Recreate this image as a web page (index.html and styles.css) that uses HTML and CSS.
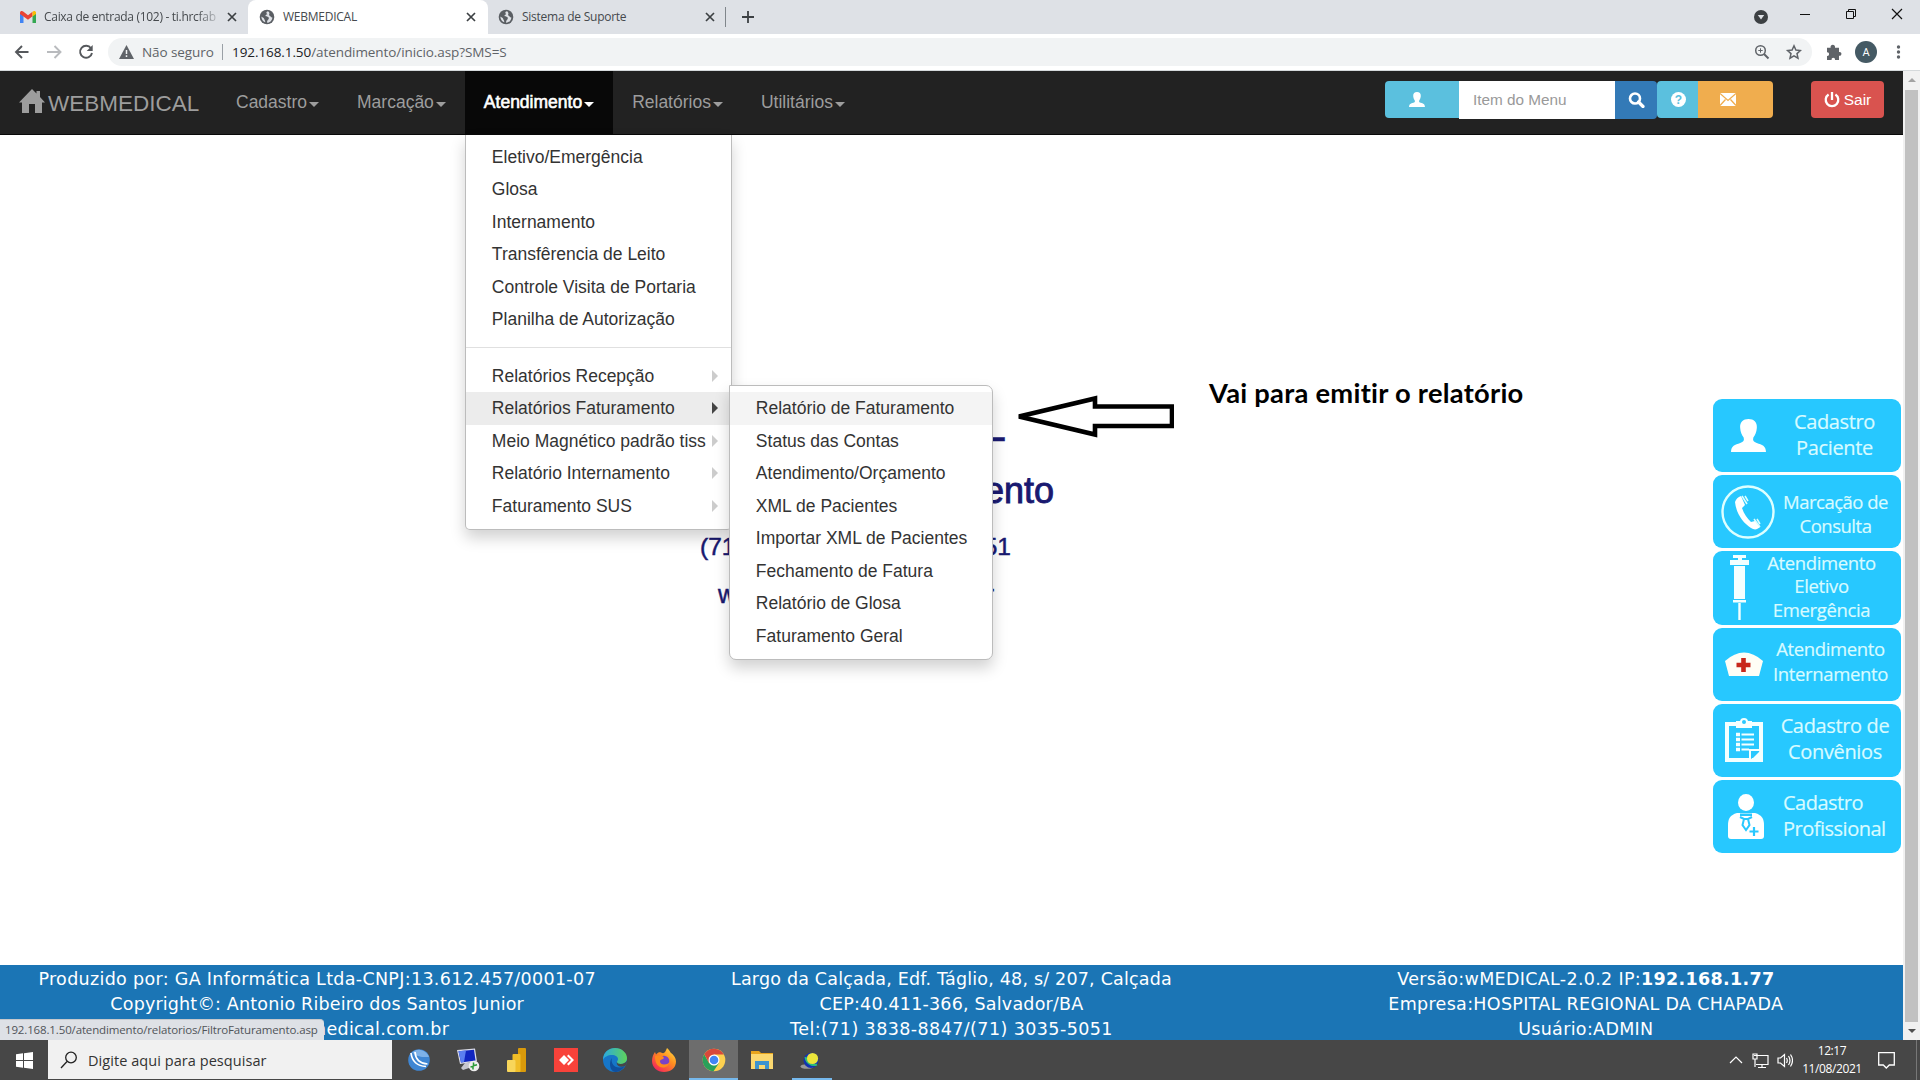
FILE: index.html
```html
<!DOCTYPE html>
<html lang="pt-BR">
<head>
<meta charset="utf-8">
<title>WEBMEDICAL</title>
<link rel="stylesheet" href="styles.css">
</head>
<body>
<svg class="defs" width="0" height="0">
  <symbol id="globe" viewBox="0 0 16 16"><circle cx="8" cy="8" r="7.3" fill="#5a5e63"/><path d="M9 2.2c-2 .3-2 2-1 2.600s-1.500.8-1.500 2 3 .3 3.300 2.200-2.300 2-1.600 4.800c3-.2 5-2.700 5.200-5.400-1.400.4-1.700-1.600-3-2S12 4.300 9 2.200zM2.300 7.600c.2 3 1.700 5 3.900 5.700.2-1.900-.6-1.900-1-3.300S3 8.600 2.300 7.600z" fill="#dee1e6"/></symbol>
  <symbol id="close" viewBox="0 0 10 10"><path d="M1 1l8 8M9 1L1 9" stroke="#3c4043" stroke-width="1.700"/></symbol>
  <symbol id="user" viewBox="0 0 36 34"><path d="M18 0c5.500 0 9 3.500 8.600 9-.3 4.500-1.600 7.500-3.600 10-.9 3 .2 4.600 3.500 5.600C32 26.400 36 27.500 36 34H0c0-6.500 4-7.600 9.500-9.400 3.300-1 4.400-2.600 3.500-5.600-2-2.500-3.300-5.500-3.600-10C9 3.500 12.500 0 18 0z" fill="#fff"/></symbol>
</svg>

<header class="tabs">
  <div class="tab">
    <svg class="fav" viewBox="0 0 16 12"><path d="M0 1.500V12h3.500V5z" fill="#4285f4"/><path d="M12.500 5v7H16V1.500z" fill="#34a853"/><path d="M0 2c0-2 2-2.500 3.500-1.300L8 4.200 12.500.7v4.600L8 8.800 0 3z" fill="#ea4335"/><path d="M12.500.7C14 -.5 16 0 16 2v1l-3.500 2.500z" fill="#fbbc04"/></svg>
    <span class="tab-title fade">Caixa de entrada (102) - ti.hrcfab</span>
    <svg class="x"><use href="#close"/></svg>
  </div>
  <div class="tab active">
    <svg class="fav g"><use href="#globe"/></svg>
    <span class="tab-title">WEBMEDICAL</span>
    <svg class="x"><use href="#close"/></svg>
  </div>
  <div class="tab last">
    <svg class="fav g"><use href="#globe"/></svg>
    <span class="tab-title">Sistema de Suporte</span>
    <svg class="x"><use href="#close"/></svg>
  </div>
  <i class="tab-sep"></i>
  <svg class="plus" viewBox="0 0 12 12"><path d="M6 0v12M0 6h12" stroke="#3c4043" stroke-width="1.800"/></svg>
  <svg class="winctl" width="160" height="34" viewBox="0 0 160 34">
    <circle cx="11" cy="17" r="7" fill="#3c4043"/><path d="M7.800 15h6.400L11 19.500z" fill="#dee1e6"/>
    <path d="M50 14.500h10" stroke="#111"/>
    <path d="M96.500 11.500h7v7h-7zM98.500 11.500v-2h7v7h-2" fill="none" stroke="#111"/>
    <path d="M142 9l10 10M152 9l-10 10" stroke="#111" stroke-width="1.200"/>
  </svg>
</header>

<div class="toolbar">
  <svg width="108" height="36" viewBox="0 0 108 36" fill="none" stroke-width="1.900">
    <path d="M28.500 18H16M22 12l-6 6 6 6" stroke="#55585c"/><path d="M47 18h13M54.500 12l6 6-6 6" stroke="#b9bbbe"/>
    <path d="M91 14.200a6 6 0 1 0 1 4.800" stroke="#55585c"/><path d="M92.700 11v6h-6z" fill="#55585c"/>
  </svg>
  <div class="omnibox">
    <svg width="15" height="14" viewBox="0 0 15 14"><path d="M7.500 0L15 14H0z" fill="#5f6368"/><path d="M7.500 5v4M7.500 10.300v1.700" stroke="#f1f3f4" stroke-width="1.500"/></svg>
    <span class="insecure">Não seguro</span><i></i><span class="url"><b>192.168.1.50</b>/atendimento/inicio.asp?SMS=S</span>
    <svg class="omni-icons" width="50" height="20" viewBox="0 0 50 20" fill="none" stroke="#5f6368" stroke-width="1.500">
      <circle cx="8.500" cy="8.500" r="4.800"/><path d="M12 12l4.500 4.500" stroke-width="1.900"/><path d="M6.300 8.500h4.400M8.500 6.300v4.400" stroke-width="1"/>
      <path d="M42 3.800l1.900 4.200 4.500.5-3.400 3.100 1 4.600-4-2.400-4 2.400 1-4.600-3.400-3.100 4.500-.5z"/>
    </svg>
  </div>
  <svg class="tool-right" width="108" height="36" viewBox="0 0 108 36">
    <path d="M15 13.800h3.600c-.8-4 5.200-4 4.400 0H27v4.300c3.300-.6 3.300 4.200 0 3.700V26h-4c.5-3-3.900-3-3.400 0H15v-4c2.800.3 2.800-4 0-3.700z" fill="#5f6368"/>
    <circle cx="54" cy="18" r="11" fill="#455a64"/><text x="54" y="22" text-anchor="middle" fill="#fff" font-family="Roboto" font-size="11">A</text>
    <g fill="#5f6368"><circle cx="86.500" cy="13" r="1.700"/><circle cx="86.500" cy="18" r="1.700"/><circle cx="86.500" cy="23" r="1.700"/></g>
  </svg>
</div>

<div class="viewport">
 <div class="page">
  <nav class="navbar">
    <a class="brand"><svg width="26" height="24" viewBox="0 0 26 24"><path d="M13 0l4.500 4.500V2H21v6l5 5.500h-3V24h-7v-9h-6v9H3V13.500H0z" fill="#9d9d9d"/></svg><span>WEBMEDICAL</span></a>
    <a class="nav-item">Cadastro<i></i></a>
    <a class="nav-item">Marcação<i></i></a>
    <div class="nav-item open">Atendimento<i></i>
      <ul class="menu">
        <li>Eletivo/Emergência</li><li>Glosa</li><li>Internamento</li><li>Transfêrencia de Leito</li><li>Controle Visita de Portaria</li><li>Planilha de Autorização</li>
        <li class="divider"></li>
        <li class="more">Relatórios Recepção</li>
        <li class="more hover">Relatórios Faturamento
          <ul class="menu sub">
            <li class="hover">Relatório de Faturamento</li><li>Status das Contas</li><li>Atendimento/Orçamento</li><li>XML de Pacientes</li><li>Importar XML de Pacientes</li><li>Fechamento de Fatura</li><li>Relatório de Glosa</li><li>Faturamento Geral</li>
          </ul>
        </li>
        <li class="more">Meio Magnético padrão tiss</li>
        <li class="more">Relatório Internamento</li>
        <li class="more">Faturamento SUS</li>
      </ul>
    </div>
    <a class="nav-item">Relatórios<i></i></a>
    <a class="nav-item">Utilitários<i></i></a>
    <div class="actions">
      <button class="btn info user"><svg width="16" height="15"><use href="#user"/></svg></button>
      <div class="field">Item do Menu</div>
      <button class="btn primary"><svg width="17" height="16" viewBox="0 0 17 16"><circle cx="7" cy="6.500" r="5" fill="none" stroke="#fff" stroke-width="2.600"/><path d="M10.500 10l4.500 4.500" stroke="#fff" stroke-width="3.200" stroke-linecap="round"/></svg></button>
      <button class="btn info help"><svg width="15" height="15" viewBox="0 0 15 15"><circle cx="7.500" cy="7.500" r="7.500" fill="#fff"/><text x="7.500" y="12" text-anchor="middle" font-family="Liberation Sans" font-weight="700" font-size="12" fill="#5bc0de">?</text></svg></button>
      <button class="btn warn"><svg width="16" height="13" viewBox="0 0 16 13"><path d="M0 0h16v13H0z" fill="#fff"/><path d="M0 .5l8 7 8-7M0 12.500l5.500-6M16 12.500l-5.500-6" fill="none" stroke="#f0ad4e" stroke-width="1.300"/></svg></button>
      <button class="btn danger"><svg width="16" height="16" viewBox="0 0 16 16" fill="none" stroke="#fff" stroke-width="2.300"><path d="M4.600 2.500a6.300 6.300 0 1 0 6.800 0M8 0v8"/></svg>Sair</button>
    </div>
  </nav>

  <main class="content">
    <section class="hero">
      <p class="h-name">L</p>
      <p class="h-title">ento</p>
      <p class="h-phone"><span>(71</span><span>51</span></p>
      <p class="h-site"><span>w</span><span>r</span></p>
    </section>
    <svg class="note-arrow" width="162" height="46" viewBox="0 0 162 46"><path d="M7 21.500L83 3.500V11.500H160V31H83V39.500z" fill="#fff" stroke="#000" stroke-width="4.600"/></svg>
    <p class="note">Vai para emitir o relatório</p>
    <aside class="shortcuts">
      <a class="card c1"><svg width="35" height="33" viewBox="0 0 36 34"><use href="#user"/></svg><span>Cadastro<br>Paciente</span></a>
      <a class="card c2"><svg width="54" height="54" viewBox="0 0 54 54"><circle cx="27" cy="27" r="25.500" fill="none" stroke="#dff" stroke-width="2.400"/><path d="M14 17c1-3 3-5 6-6l4 9-3 3c2 6 5 10 9 14l4-1 5 6c-3 3-6 3-9 1C22 38 15 28 14 17z" fill="#fff"/><path d="M21 11l5 8M24 11l3 5M33 34l6 8M36 34l3 5" stroke="#dff" stroke-width="1.500"/></svg><span>Marcação de<br>Consulta</span></a>
      <a class="card c3"><svg width="19" height="65" viewBox="0 0 19 65" fill="#f4ffff"><path d="M3 0h13v3H3zM8 3h4v2H8zM0 5h19v5H0zM4 11h11v33H4zM3 45h13v2.500H3zM8.300 48h2.400v17H8.300z"/></svg><span>Atendimento<br>Eletivo<br>Emergência</span></a>
      <a class="card c4"><svg width="38" height="25" viewBox="0 0 38 25"><path d="M0 9Q19-8 38 9l-4 15H4z" fill="#fffef6"/><path d="M18.500 6v14M11.500 13h14" stroke="#c8281c" stroke-width="4.600"/></svg><span>Atendimento<br>Internamento</span></a>
      <a class="card c5"><svg width="38" height="44" viewBox="0 0 38 44"><path d="M2 6h34v36H2z" fill="none" stroke="#f4ffff" stroke-width="4"/><path d="M11 3h16v7H11z" fill="#f4ffff"/><circle cx="19" cy="4" r="3" fill="#27c8ff" stroke="#f4ffff" stroke-width="2"/><path d="M11 16.500h4M11 21.500h4M11 26.500h4M11 31.500h4" stroke="#f4ffff" stroke-width="3.600"/><path d="M16.500 16.500H29M16.500 21.500H29M16.500 26.500H29M16.500 31.500H24" stroke="#f4ffff" stroke-width="2"/><path d="M25 42V32h11" fill="#27c8ff" stroke="#f4ffff" stroke-width="2"/><path d="M35 33v8h-8z" fill="#f4ffff"/></svg><span>Cadastro de<br>Convênios</span></a>
      <a class="card c6"><svg width="36" height="45" viewBox="0 0 36 45"><ellipse cx="18" cy="8.500" rx="8" ry="8.500" fill="#fff"/><path d="M9 19h18c7 2 9 6 9 12v11q0 3-3 3H3q-3 0-3-3V31c0-6 2-10 9-12z" fill="#fff"/><path d="M12 19.500h12v2.500H12z" fill="#27c8ff"/><path d="M12 23l4 2h4l4-2M16 25l-1.500 6 3.500 5 3.500-5-1.500-6" fill="none" stroke="#27c8ff" stroke-width="2"/><path d="M26 33v9M21.500 37.500h9" stroke="#27c8ff" stroke-width="2.200"/></svg><span>Cadastro<br>Profissional</span></a>
    </aside>
  </main>

  <footer class="footer">
    <div class="f1">Produzido por: GA Informática Ltda-CNPJ:13.612.457/0001-07<br><span class="tight">Copyright©: Antonio Ribeiro dos Santos Junior</span><br><span class="site">medical.com.br</span></div>
    <div class="f2">Largo da Calçada, Edf. Táglio, 48, s/ 207, Calçada<br>CEP:40.411-366, Salvador/BA<br><span class="wide">Tel:(71) 3838-8847/(71) 3035-5051</span></div>
    <div class="f3">Versão:wMEDICAL-2.0.2 IP:<b>192.168.1.77</b><br>Empresa:HOSPITAL REGIONAL DA CHAPADA<br>Usuário:ADMIN</div>
  </footer>
 </div>
 <div class="scrollbar"><i class="up"></i><b></b><i class="down"></i></div>
 <div class="status">192.168.1.50/atendimento/relatorios/FiltroFaturamento.asp</div>
</div>

<div class="taskbar">
  <div class="start"><svg width="17" height="17" viewBox="0 0 17 17" fill="#fff"><path d="M0 2.300L7 1.300V8H0zM8 1.200L17 0v8H8zM0 9h7v6.700l-7-1zM8 9h9v8l-9-1.200z"/></svg></div>
  <div class="search"><svg width="18" height="18" viewBox="0 0 18 18" fill="none" stroke="#222" stroke-width="1.300"><circle cx="11" cy="6.500" r="5.300"/><path d="M7 10.500L1 17"/></svg><span>Digite aqui para pesquisar</span></div>
  <div class="app"><svg viewBox="0 0 24 24"><circle cx="12" cy="12" r="10.800" fill="#3f86d3"/><path d="M5 4.500A10.500 10.500 0 0 1 22 9c-4 0-10 1-17-4.500z" fill="#7db1e8"/><path d="M4 5c1 8 6 13 15 13.500M8 4c.5 7 5 11.500 12.500 12" fill="none" stroke="#fff" stroke-width="1.700"/></svg></div>
  <div class="app"><svg viewBox="0 0 24 24"><path d="M1 2l18-1.500 2 13L4 16z" fill="#dcdde8"/><path d="M2.500 3.200L18 1.800l1.500 10.700L5 14.500z" fill="#1025c0"/><path d="M2.500 3.200L10 2.500l-2 11.600-3 .4z" fill="#5b7ff0"/><path d="M9 15l6-1 1 5-9 3-2-2z" fill="#c7c7cf"/><circle cx="18" cy="18" r="5.300" fill="#eee"/><path d="M14.500 19l2.500-.5v3M17.500 14.500v3.300l3.500-1" fill="none" stroke="#2b9c38" stroke-width="1.500"/></svg></div>
  <div class="app"><svg viewBox="0 0 24 24"><rect x="13" y="0" width="8" height="24" rx="1" fill="#d99a0b"/><rect x="7.500" y="6" width="8" height="18" rx="1" fill="#f0bd27"/><rect x="2" y="12" width="8.500" height="12" rx="1" fill="#f8d65a"/></svg></div>
  <div class="app"><svg viewBox="0 0 24 24"><path d="M0 0h24v24H0z" fill="#f8423a"/><path d="M10 7l5 5-5 5-5-5zM13 8l1.500-1.500L20 12l-5.500 5.500L13 16l4-4z" fill="#fff"/></svg></div>
  <div class="app"><svg viewBox="0 0 24 24"><defs><linearGradient id="e1" x2="1"><stop stop-color="#2aa9e0"/><stop offset="1" stop-color="#5fd35a"/></linearGradient></defs><circle cx="12" cy="12" r="12" fill="#1676c8"/><path d="M0 12C0 4 6 0 12 0c7 0 12 5 12 10 0 4-3 6-6.500 6-2.500 0-3.500-1-3.500-2s1-1.500 1-3c0-2-2.500-4-6-4-4 0-8 2-9 5z" fill="url(#e1)"/><path d="M9 10c-1.500 5 2 10 8 9.500 2 0 4-1 5-2-2 4-6 6.500-10 6.500C6 23 6 13 9 10z" fill="#0f4f9e"/><path d="M14 14c0 1 1.200 2 3.500 2 3 0 5.500-1.500 6.300-3.500 .4 3-.6 5-1.800 5.500-5 2-9.500-1-8-4z" fill="#474747"/></svg></div>
  <div class="app"><svg viewBox="0 0 24 24"><defs><linearGradient id="f1" x1="1" y1="0" x2=".2" y2="1"><stop stop-color="#ffe84a"/><stop offset=".45" stop-color="#ff8f1f"/><stop offset="1" stop-color="#f5205c"/></linearGradient></defs><path d="M15 0c2 2 3 3 3.500 4.500C22 7 24 10 24 13.500 24 20 18.500 24 12 24S0 19.500 0 13C0 9 1.500 6 3 4l1 2.500C6 4 8 4 9 4.500 12 6 13 5 15 0z" fill="url(#f1)"/><circle cx="12" cy="13" r="5.300" fill="#7a43c6"/><path d="M3 8c4-1 8-.5 9 2-1 2-4 1-4 3.500 0 2 2 3 4 3 3 0 4-1 5-2 0 3-3 5-6 5-5 0-8-4-8-11z" fill="#ff8a1c"/></svg></div>
  <div class="app on"><svg viewBox="0 0 24 24"><circle cx="12" cy="12" r="11.300" fill="#fdd04f"/><path d="M12 12L2.200 6.300A11.300 11.300 0 0 1 21.800 6.500H12z" fill="#d9483b"/><path d="M2.200 6.300L7 15l5 2.500L17 15l-5.500 8.300A11.300 11.300 0 0 1 2.200 6.300z" fill="#2aa05a"/><path d="M12 6.500H2.500L7 15z" fill="#d9483b"/><circle cx="12" cy="12" r="5.500" fill="#fff"/><circle cx="12" cy="12" r="4.300" fill="#4285f4"/></svg></div>
  <div class="app"><svg viewBox="0 0 24 24"><path d="M1 3h8l2 2h12v15H1z" fill="#e8a51d"/><path d="M1 6h22v15H1z" fill="#fbd870"/><path d="M5 21v-8h14v8h-4v-4H9v4z" fill="#3d94cf"/></svg></div>
  <div class="app run"><svg viewBox="0 0 24 24"><ellipse cx="8" cy="18.500" rx="6.500" ry="2.300" fill="#999"/><circle cx="12" cy="12.500" r="7.500" fill="#1433b0"/><path d="M6.500 9c1 6 6 9.500 11.500 7.500" stroke="#2dbb7a" stroke-width="2" fill="none"/><circle cx="13.500" cy="10.500" r="5.600" fill="#ece53a"/></svg></div>
  <div class="tray">
    <svg width="64" height="20" viewBox="0 0 64 20" fill="none" stroke="#fff" stroke-width="1.200"><path d="M1 13l6-6 6 6"/><path d="M25 5.500h14v9H27M33 14.500v3M29 17.500h8M24 4v5h4V4zM26 9v8"/><path d="M49 8v5h2.500l4 3.500v-12L51.500 8zM57.500 8q1.500 2.500 0 5M59.500 6q3 4.500 0 9M61.500 4.500q4 6 0 12"/></svg>
    <div class="clock">12:17<br>11/08/2021</div>
    <svg class="bell" width="17" height="17" viewBox="0 0 17 17"><path d="M.7 .7h15.600v12.300h-5l-3 3-3-3H.7z" fill="none" stroke="#fff" stroke-width="1.300"/></svg>
  </div>
</div>
</body>
</html>
```
FILE: styles.css
```css
* { box-sizing: border-box; }
body { margin: 0; width: 1920px; height: 1080px; overflow: hidden; display: flex; flex-direction: column; background: #fff; font-family: "Liberation Sans", Arial, sans-serif; }
svg { display: block; flex: none; }
.defs { position: absolute; }
p, ul { margin: 0; padding: 0; list-style: none; }

/* browser chrome */
.tabs { height: 34px; background: #dee1e6; display: flex; align-items: center; font: 12px "Open Sans", sans-serif; color: #45494d; padding-left: 8px; }
.tab { width: 240px; height: 34px; display: flex; align-items: center; padding: 0 11px 0 12px; }
.tab.active { background: #fff; border-radius: 8px 8px 0 0; padding: 0 12px 0 11px; }
.tab.last { padding: 0 13px 0 10px; }
.fav { width: 16px; height: 12px; margin-right: 8px; }
.fav.g { height: 16px; }
.tab-title { flex: 1; white-space: nowrap; letter-spacing: -.25px; padding-bottom: 1px; }
.fade { letter-spacing: -.3px; -webkit-mask-image: linear-gradient(90deg, #000 85%, transparent); mask-image: linear-gradient(90deg, #000 85%, transparent); }
.x { width: 10px; height: 10px; margin-left: 4px; }
.tab-sep { width: 1px; height: 20px; background: #80868b; margin-left: -3px; }
.plus { width: 12px; height: 12px; margin-left: 16px; }
.winctl { margin-left: auto; margin-right: 10px; }
.toolbar { height: 37px; border-bottom: 1px solid #d5d9db; display: flex; align-items: center; }
.omnibox { width: 1704px; height: 28px; border-radius: 14px; background: #f1f3f4; display: flex; align-items: center; padding: 0 10px 0 11px; font: 13.500px "Open Sans", sans-serif; letter-spacing: -.08px; color: #5f6368; white-space: nowrap; }
.insecure { margin-left: 8px; width: 72px; }
.omnibox i { width: 1px; height: 16px; background: #9aa0a6; margin: 0 9px 0 8px; }
.url b { font-weight: 400; color: #202124; }
.omni-icons { margin-left: auto; }

/* page */
.viewport { height: 969px; display: flex; position: relative; }
.page { width: 1903px; display: flex; flex-direction: column; }
.navbar { height: 64px; background: #222; border-bottom: 1px solid #080808; display: flex; color: #9d9d9d; font-size: 17.500px; line-height: 25px; }
.brand { width: 217px; padding: 18px 0 0 19px; display: flex; font-size: 22.500px; }
.brand span { margin: 2px 0 0 3px; }
.nav-item { padding: 19px 19px 0; display: flex; white-space: nowrap; position: relative; }
.nav-item > i { border: 5px solid transparent; border-top-color: currentColor; border-bottom: 0; margin: 12px 0 0 2px; height: 5px; }
.nav-item.open { background: #080808; color: #fff; -webkit-text-stroke: .6px #fff; }
.menu { position: absolute; top: 63.500px; left: 0; width: 267px; padding: 6px 0 6.500px; background: #fff; color: #333; border: 1px solid #bcbcbc; border-top: 0; border-radius: 0 0 5px 5px; box-shadow: 0 8px 15px rgba(0,0,0,.18); -webkit-text-stroke: 0; z-index: 2; }
.menu li { height: 32.500px; line-height: 32.500px; padding-left: 26px; position: relative; }
.menu li.divider { height: 1px; margin: 11.500px 0; background: #e0e0e0; }
.menu li.hover { background: #ececec; }
.menu li.more::after { content: ""; position: absolute; right: 13px; top: 10px; border: 6px solid transparent; border-left-color: #ccc; border-right: 0; }
.menu li.more.hover::after { border-left-color: #444; }
.menu.sub { top: -7px; left: 263px; width: 264px; border: 1px solid #bcbcbc; border-radius: 0 7px 7px 7px; }
.menu.sub li.hover { background: #f4f4f4; }
.actions { margin-left: auto; padding: 10px 19px 0 0; display: flex; align-items: flex-start; }
.btn { border: 0; height: 37px; color: #fff; display: flex; align-items: center; justify-content: center; padding: 0; font: 15.500px "Liberation Sans", Arial, sans-serif; }
.info { background: #5bc0de; }
.user { width: 74px; border-radius: 4px 0 0 4px; padding-right: 10px; }
.field { width: 156px; height: 38px; background: #fff; color: #999; font-size: 15.300px; line-height: 38px; padding-left: 14px; }
.primary { width: 42px; height: 38px; background: #337ab7; border-radius: 0 4px 4px 0; }
.help { width: 41px; border-radius: 4px 0 0 4px; padding-left: 2px; }
.warn { width: 75px; background: #f0ad4e; border-radius: 0 4px 4px 0; padding-right: 15px; }
.danger { width: 73px; background: #d9534f; border-radius: 4px; margin-left: 38px; gap: 4px; }
.content { height: 830px; position: relative; }
.hero { position: absolute; left: 700px; top: 261px; width: 354px; color: #191970; -webkit-text-stroke: .5px #191970; white-space: nowrap; }
.h-name { font-size: 45px; line-height: 60px; width: 306px; text-align: right; }
.h-title { font-size: 36px; line-height: 40px; text-align: right; margin-top: 15px; -webkit-text-stroke-width: .9px; }
.h-phone { font-size: 24.500px; line-height: 30px; width: 311px; margin-top: 21px; display: flex; justify-content: space-between; }
.h-site { font-size: 25px; line-height: 30px; margin: 17px 0 0 18px; width: 276px; display: flex; justify-content: space-between; }
.note-arrow { position: absolute; left: 1012px; top: 260px; }
.note { position: absolute; left: 1209px; top: 240px; font: 700 27.300px/36px Lato, sans-serif; letter-spacing: .26px; color: #000; white-space: nowrap; }
.shortcuts { position: absolute; left: 1713px; top: 264px; width: 188px; display: flex; flex-direction: column; gap: 3px; }
.card { height: 73.200px; border-radius: 9px; background: #27c8ff; color: #d8fbff; display: flex; align-items: center; font: 20px/26px "Open Sans", sans-serif; white-space: nowrap; }
.card span { flex: 1; text-align: center; letter-spacing: -.35px; -webkit-text-stroke: .2px #d8fbff; }
.c1 { padding: 0 12px 0 18px; }
.c1 span { padding: 0 0 2px 14px; }
.c2 { padding: 0 8px; font-size: 18.500px; line-height: 24px; }
.c2 span { padding: 5px 0 0 3px; letter-spacing: -.5px; }
.c3 { padding: 0 13px 0 17px; font-size: 18.500px; line-height: 23.500px; }
.c3 span { padding: 0 0 4px 6px; }
.c4 { padding: 0 6px 0 12px; font-size: 18.500px; line-height: 25px; }
.c4 span { padding: 0 0 6px 3px; }
.c5 { padding: 0 6px 0 12px; }
.c5 span { padding: 0 0 3px 12px; }
.c6 { padding: 0 0 0 15px; }
.c6 span { text-align: left; padding: 0 0 2px 19px; letter-spacing: -.5px; }
.footer { height: 75px; background: #1b75b5; color: #fff; display: flex; font: 17.500px/25px "DejaVu Sans", Verdana, sans-serif; text-align: center; white-space: nowrap; padding-top: 2px; }
.footer div { flex: 1 1 0; height: 73px; }
.f1 { letter-spacing: .32px; }
.tight { letter-spacing: .17px; }
.site { padding-left: 124px; }
.f2 { letter-spacing: .2px; }
.wide { letter-spacing: .42px; }
.f3 { letter-spacing: .32px; }
.scrollbar { width: 17px; background: #f1f1f1; display: flex; flex-direction: column; align-items: center; justify-content: space-between; padding: 7px 0; }
.scrollbar i { border: 4px solid transparent; }
.scrollbar .up { border-top: 0; border-bottom: 4px solid #a3a3a3; }
.scrollbar .down { border-bottom: 0; border-top: 4px solid #505050; }
.scrollbar b { width: 13px; height: 932px; background: #c1c1c1; }
.status { position: absolute; left: 0; bottom: 0; width: 324px; height: 21px; background: #dee1e6; border-top: 1px solid #c5c8cc; border-radius: 0 4px 0 0; font: 11.500px/20px "Open Sans", sans-serif; letter-spacing: -.14px; color: #505459; padding-left: 5px; white-space: nowrap; }

/* taskbar */
.taskbar { height: 40px; background: #474747; display: flex; }
.start { width: 48px; display: flex; align-items: center; justify-content: center; }
.search { width: 344px; height: 39px; background: #f1f1f1; display: flex; align-items: center; padding-left: 12px; gap: 10px; font: 14.500px "Open Sans", sans-serif; letter-spacing: .06px; color: #333; margin-right: 3px; }
.search span { padding-top: 2px; }
.app { width: 49px; display: flex; align-items: center; justify-content: center; padding-right: 2px; }
.app svg { width: 24px; height: 24px; }
.app.on { padding-right: 0; background: linear-gradient(#76b9ed, #76b9ed) 0 100% / 100% 2px no-repeat #6d6d6d; }
.app.run { background: linear-gradient(#76b9ed, #76b9ed) 50% 100% / 40px 2px no-repeat; }
.tray { margin-left: auto; display: flex; align-items: center; color: #fff; margin-right: 3px; border-right: 1px solid #777; padding-right: 21px; }
.clock { width: 78px; text-align: center; font: 12px/18px "Open Sans", sans-serif; letter-spacing: -.4px; padding-bottom: 1px; }
.bell { margin-left: 7px; }
```
